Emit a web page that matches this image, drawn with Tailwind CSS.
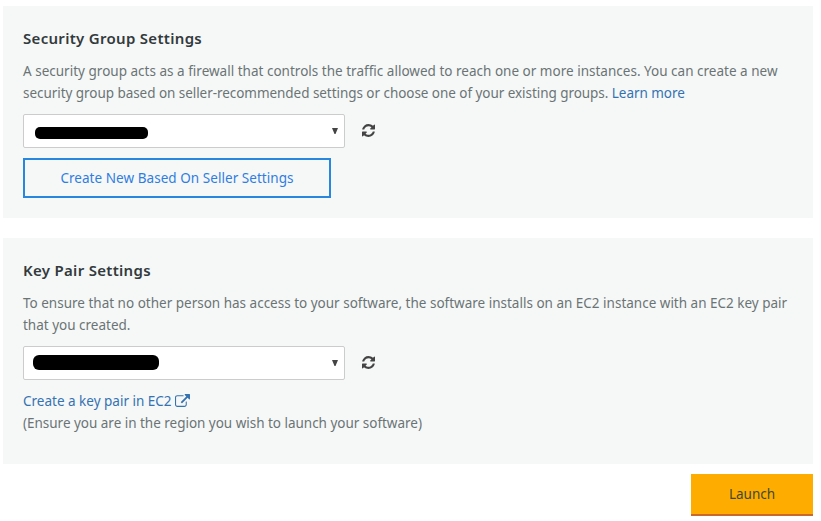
<!DOCTYPE html>
<html lang="en">
<head>
<meta charset="utf-8">
<title>Launch settings</title>
<script src="https://cdn.jsdelivr.net/npm/@tailwindcss/browser@4"></script>
</head>
<body class="w-[821px] h-[521px] overflow-hidden bg-white font-['Noto_Sans',sans-serif] text-[13.5px] leading-[22px] text-[#6b7475]">
<svg class="hidden">
  <symbol id="refresh" viewBox="0 0 1536 1536"><path d="M1511 928q0 5-1 7-64 268-268 434.500t-478 166.500q-146 0-282.500-55t-243.500-157l-129 129q-19 19-45 19t-45-19-19-45v-448q0-26 19-45t45-19h448q26 0 45 19t19 45-19 45l-137 137q71 66 161 102t187 36q134 0 250-65t186-179q11-17 53-117 8-23 30-23h192q13 0 22.500 9.500t9.500 22.500zm25-800v448q0 26-19 45t-45 19h-448q-26 0-45-19t-19-45 19-45l138-138q-148-137-349-137-134 0-250 65t-186 179q-11 17-53 117-8 23-30 23h-199q-13 0-22.500-9.500t-9.500-22.500v-7q65-268 270-434.500t480-166.500q146 0 284 55.500t245 156.500l130-129q19-19 45-19t45 19 19 45z"/></symbol>
  <symbol id="arrow" viewBox="0 0 6 6"><path d="M0 0H6L3.500 6H2.500z"/></symbol>
</svg>
<main class="ml-[3px] w-[810px] pt-[6px]">
  <section class="h-[212px] bg-[#f6f8f8] pl-5 pt-[21px]">
    <h2 class="text-[15px] font-semibold tracking-[0.3px] text-[#333a3c] whitespace-nowrap">Security Group Settings</h2>
    <p class="mt-[11px] whitespace-nowrap"><span class="tracking-[0.012px]">A security group acts as a firewall that controls the traffic allowed to reach one or more instances. You can create a new</span><br><span class="tracking-[-0.05px]">security group based on seller-recommended settings or choose one of your existing groups. <a class="text-[#3572b0]">Learn more</a></span></p>
    <div class="mt-[10px] flex items-center">
      <div class="flex h-[34px] w-[322px] items-center justify-between rounded-[2px] border border-[#ccc] bg-white pl-[11px] pr-[6px]">
        <span class="mt-1 h-3 w-[113px] rounded-[5px] bg-black"></span>
        <svg class="size-[6px] text-[#444]" fill="currentColor"><use href="#arrow"/></svg>
      </div>
      <svg class="mb-px ml-[17px] size-[13px] text-[#444]" fill="currentColor"><use href="#refresh"/></svg>
    </div>
    <button class="mt-[10px] flex h-10 w-[308px] items-center justify-center border-2 border-[#2787de] tracking-[0.05px] text-[#2f7de1] whitespace-nowrap">Create New Based On Seller Settings</button>
  </section>
  <section class="mt-5 h-[226px] bg-[#f6f8f8] pl-5 pt-[21px]">
    <h2 class="text-[15px] font-semibold tracking-[0.3px] text-[#333a3c] whitespace-nowrap">Key Pair Settings</h2>
    <p class="mt-[11px] whitespace-nowrap">To ensure that no other person has access to your software, the software installs on an EC2 instance with an EC2 key pair<br>that you created.</p>
    <div class="mt-[10px] flex items-center">
      <div class="flex h-[34px] w-[322px] items-center justify-between rounded-[2px] border border-[#ccc] bg-white pl-[9px] pr-[6px]">
        <span class="mb-px h-[15px] w-[126px] rounded-[6px] bg-black"></span>
        <svg class="size-[6px] text-[#444]" fill="currentColor"><use href="#arrow"/></svg>
      </div>
      <svg class="mb-px ml-[17px] size-[13px] text-[#444]" fill="currentColor"><use href="#refresh"/></svg>
    </div>
    <a class="mt-[10px] flex items-center text-[#3572b0] whitespace-nowrap"><span class="w-[152px]">Create a key pair in EC2</span>
      <svg class="mb-[2px] h-[13px] w-[15px]" viewBox="0 0 1792 1536" fill="currentColor"><path d="M1408 928v320q0 119-84.500 203.500t-203.500 84.500h-832q-119 0-203.500-84.500t-84.500-203.500v-832q0-119 84.500-203.500t203.500-84.500h704q14 0 23 9t9 23v64q0 14-9 23t-23 9h-704q-66 0-113 47t-47 113v832q0 66 47 113t113 47h832q66 0 113-47t47-113v-320q0-14 9-23t23-9h64q14 0 23 9t9 23zm384-864v512q0 26-19 45t-45 19-45-19l-176-176-652 652q-10 10-23 10t-23-10l-114-114q-10-10-10-23t10-23l652-652-176-176q-19-19-19-45t19-45 45-19h512q26 0 45 19t19 45z"/></svg>
    </a>
    <p class="tracking-[-0.02px] whitespace-nowrap">(Ensure you are in the region you wish to launch your software)</p>
  </section>
  <button class="ml-auto mt-[10px] flex h-[42px] w-[122px] items-center justify-center border-b-2 border-[#c96a2b] bg-[#ffac00] text-[#3c4a35]">Launch</button>
</main>
</body>
</html>
